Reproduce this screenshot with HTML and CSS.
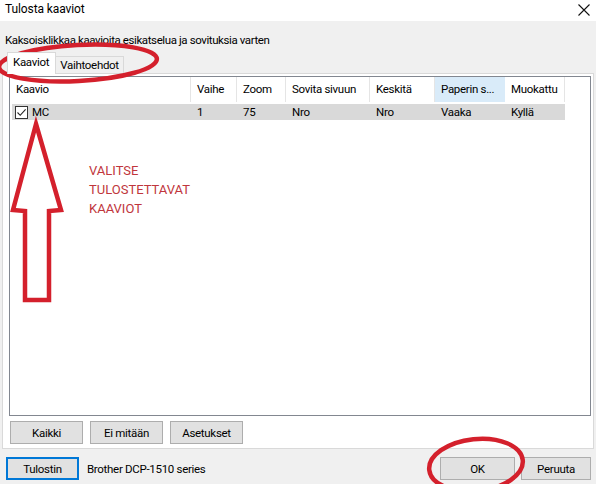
FILE: index.html
```html
<!DOCTYPE html>
<html lang="fi">
<head>
<meta charset="utf-8">
<title>Tulosta kaaviot</title>
<link rel="stylesheet" href="styles.css">
</head>
<body>
<div class="window">
  <div class="titlebar">
    <span class="title">Tulosta kaaviot</span>
    <svg class="close" width="12" height="12" viewBox="0 0 12 12"><path d="M0.5 0.5 L11.5 11.5 M11.5 0.5 L0.5 11.5" stroke="#111" stroke-width="1.1" fill="none"/></svg>
  </div>
  <div class="body">
    <div class="hint">Kaksoisklikkaa kaavioita esikatselua ja sovituksia varten</div>
    <div class="tabs">
      <div class="tab active">Kaaviot</div>
      <div class="tab">Vaihtoehdot</div>
    </div>
    <div class="panel">
      <div class="listview">
        <div class="lv-header">
          <div class="col">Kaavio</div>
          <div class="col">Vaihe</div>
          <div class="col">Zoom</div>
          <div class="col">Sovita sivuun</div>
          <div class="col">Keskitä</div>
          <div class="col hot">Paperin s...</div>
          <div class="col">Muokattu</div>
        </div>
        <div class="lv-row">
          <div class="cell first"><span class="check"><svg width="11" height="11" viewBox="0 0 11 11"><path d="M1.5 5.5 L4.2 8.3 L9.6 2.3" stroke="#222" stroke-width="1.1" fill="none"/></svg></span>MC</div>
          <div class="cell">1</div>
          <div class="cell">75</div>
          <div class="cell">Nro</div>
          <div class="cell">Nro</div>
          <div class="cell">Vaaka</div>
          <div class="cell">Kyllä</div>
        </div>
      </div>
      <div class="btnrow">
        <button class="btn">Kaikki</button>
        <button class="btn">Ei mitään</button>
        <button class="btn">Asetukset</button>
      </div>
    </div>
    <div class="footer">
      <button class="btn focus">Tulostin</button>
      <span class="printer">Brother DCP-1510 series</span>
      <span class="spacer"></span>
      <button class="btn ok">OK</button>
      <button class="btn cancel">Peruuta</button>
    </div>
  </div>
  <div class="note">VALITSE<br>TULOSTETTAVAT<br>KAAVIOT</div>
  <svg class="annot" width="596" height="484" viewBox="0 0 596 484">
    <g fill="none" stroke="#d4202c" stroke-width="4.5" stroke-linejoin="miter">
      <ellipse cx="78" cy="63" rx="79" ry="18" transform="rotate(-3 78 63)"/>
      <ellipse cx="476" cy="465" rx="47" ry="26" transform="rotate(-6 476 465)"/>
      <polygon points="36,124 61,210 49,211 49,300 25,300 25,211 13,210"/>
    </g>
  </svg>
</div>
</body>
</html>
```
FILE: styles.css
```css
* { box-sizing: border-box; }
html, body { margin: 0; padding: 0; }
body {
  font-family: Roboto, "Noto Sans", sans-serif;
  font-size: 11.5px;
  letter-spacing: -0.3px;
  color: #000;
  background: #f0f0f0;
}
.window {
  position: relative;
  width: 596px;
  height: 484px;
  background: #f0f0f0;
  overflow: hidden;
}
.titlebar {
  height: 21px;
  background: #fff;
  display: flex;
  align-items: center;
  justify-content: space-between;
  padding: 0 6px 3px 5px;
}
.title { font-size: 12px; line-height: 16px; letter-spacing: -0.1px; }
.close { margin-top: 2px; }
.body {
  display: flex;
  flex-direction: column;
}
.hint {
  margin: 11px 0 0 5px;
  line-height: 16px;
  letter-spacing: -0.4px;
}
.tabs {
  display: flex;
  align-items: flex-end;
  margin: 4px 0 0 7px;
  height: 21px;
  position: relative;
  z-index: 1;
}
.tab {
  height: 17px;
  padding: 0 4px;
  border: 1px solid #d9d9d9;
  border-bottom: none;
  background: #f0f0f0;
  line-height: 16px;
}
.tab.active {
  background: #fff;
  padding: 1px 6px 0 5px;
  margin-bottom: -1px;
  height: 22px;
}
.tab + .tab { border-left: none; }
.panel {
  margin: 0 2px 0 2px;
  height: 376px;
  border: 1px solid #d9d9d9;
  background: #fff;
  display: flex;
  flex-direction: column;
  padding: 2px 2px 0 6px;
}
.listview {
  height: 340px;
  border: 1px solid #828790;
  background: #fff;
}
.lv-header {
  display: grid;
  grid-template-columns: 181px 46px 49px 84px 65px 70px 60px;
  height: 25px;
}
.col {
  border-right: 1px solid #e5e5e5;
  padding-left: 6px;
  line-height: 25px;
  white-space: nowrap;
}
.col.hot { background: #d9ebf9; border-right-color: #d9ebf9; }
.lv-row {
  display: grid;
  grid-template-columns: 179px 46px 49px 84px 65px 70px 60px;
  margin: 2px 0 0 2px;
  height: 16px;
  width: 553px;
  background: #d9d9d9;
}
.cell {
  padding-left: 6px;
  line-height: 16px;
  white-space: nowrap;
}
.cell.first {
  padding-left: 3px;
  display: flex;
  align-items: center;
}
.check {
  width: 13px;
  height: 13px;
  border: 1px solid #333;
  background: #fff;
  display: inline-flex;
  align-items: center;
  justify-content: center;
  margin-right: 4px;
}
.btnrow {
  display: flex;
  gap: 7px;
  margin: 5px 0 0 0;
  padding-left: 1px;
}
.btn {
  font: inherit;
  letter-spacing: inherit;
  width: 73px;
  height: 23px;
  padding: 0;
  border: 1px solid #adadad;
  background: #e1e1e1;
  color: #000;
}
.footer {
  display: flex;
  align-items: center;
  height: 23px;
  margin-top: 8px;
  padding: 0 5px 0 6px;
}
.btn.focus {
  border: 2px solid #0078d7;
  width: 73px;
}
.printer { margin-left: 8px; }
.spacer { flex: 1; }
.btn.ok { width: 75px; }
.btn.cancel { width: 70px; margin-left: 6px; }
.note {
  position: absolute;
  left: 89px;
  top: 161px;
  color: #c0363c;
  font-size: 13px;
  letter-spacing: 0;
  line-height: 19px;
}
.annot {
  position: absolute;
  left: 0;
  top: 0;
  pointer-events: none;
}
```
